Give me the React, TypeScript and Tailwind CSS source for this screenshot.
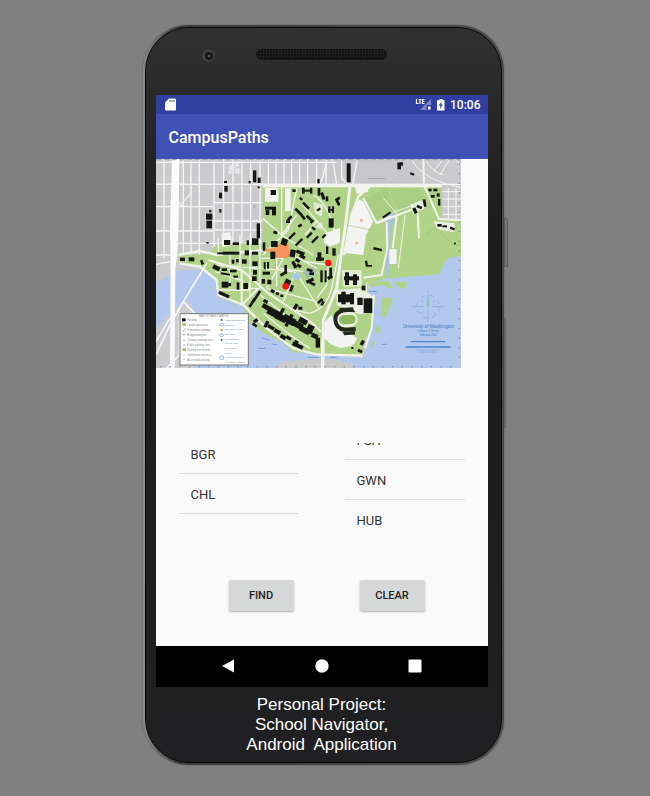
import React from "react";

type Box = [number, number, number, number, number?];

const cityBlocks: Box[] = [
  [309, 46, 10, 36], [296, 78, 6, 7], [323, 68, 9, 16], [222, 78, 9, 6], [223, 93, 10, 17],
  [207, 113, 9, 17], [208, 162, 6, 11], [168, 176, 19, 18], [169, 197, 17, 23], [320, 205, 10, 45],
  [178, 165, 6, 7], [169, 261, 7, 5], [590, 25, 12, 57], [742, 23, 11, 20], [748, 22, 11, 10], [780, 54, 13, 6, 20],
  [502, 72, 7, 13], [323, 94, 6, 6],
];

const campusBuildings: Box[] = [
  [345, 155, 33, 9], [347, 165, 11, 15], [366, 162, 12, 19], [362, 105, 16, 15],
  [427, 103, 10, 8], [456, 98, 8, 18], [462, 104, 20, 6], [480, 98, 7, 18], [410, 186, 18, 8, -50], [408, 196, 12, 8],
  [455, 148, 26, 8, 45], [432, 166, 26, 8, 45], [450, 182, 18, 8, 50], [448, 128, 10, 7, 40],
  [467, 185, 20, 8, 45], [480, 196, 12, 7, -45], [444, 208, 12, 8, -30], [484, 217, 13, 7, 40],
  [503, 99, 8, 23], [514, 112, 9, 22, -20], [527, 124, 8, 15], [555, 128, 16, 8, -30], [560, 134, 8, 18, -25],
  [535, 154, 6, 20], [546, 154, 6, 20], [534, 162, 18, 5], [536, 190, 15, 28], [500, 160, 12, 7, -35],
  [413, 239, 26, 7, -45], [433, 258, 28, 7, -45], [467, 237, 22, 7, -45], [482, 250, 26, 7, -45], [515, 240, 14, 7, -45],
  [370, 228, 12, 9, 20], [363, 258, 20, 18], [394, 251, 18, 20, 20], [338, 262, 8, 25], [361, 290, 15, 22],
  [420, 284, 16, 22, 10], [438, 288, 26, 10, 22], [448, 300, 18, 10, 30], [502, 292, 12, 26], [498, 308, 24, 9],
  [528, 274, 7, 23], [547, 280, 10, 22], [428, 318, 10, 22, -25], [436, 312, 14, 9, 30], [440, 328, 14, 9, 30],
  [222, 255, 19, 15], [248, 262, 19, 8], [290, 256, 7, 14], [306, 250, 19, 20],
  [202, 292, 26, 6], [218, 290, 50, 9], [284, 286, 13, 15], [306, 290, 18, 9], [90, 308, 15, 10],
  [116, 307, 17, 12], [152, 315, 8, 14, -20], [245, 314, 8, 12], [258, 312, 8, 10], [276, 313, 14, 13], [307, 319, 16, 14],
  [188, 332, 22, 13, 25], [215, 340, 16, 8], [240, 344, 20, 8], [212, 354, 28, 6, 10], [250, 362, 14, 6],
  [341, 321, 6, 22], [351, 321, 6, 20], [309, 345, 12, 14], [306, 364, 14, 14], [338, 350, 22, 9], [335, 372, 10, 14], [352, 374, 12, 14],
  [403, 330, 8, 26], [390, 352, 22, 8, -30], [403, 373, 18, 22, 25], [420, 390, 9, 20, 20],
  [215, 380, 20, 18], [235, 384, 8, 10], [260, 382, 8, 22], [280, 384, 14, 18], [205, 414, 34, 10, 25],
  [362, 404, 12, 9, 30], [377, 412, 10, 8, 20], [391, 419, 9, 7], [432, 446, 10, 18, 30], [445, 455, 12, 9],
  [470, 342, 18, 8, 20], [478, 352, 14, 8], [468, 372, 24, 10, -25], [478, 382, 18, 8, 25],
  [511, 346, 7, 36], [524, 346, 6, 36], [538, 338, 8, 24], [532, 362, 16, 10, -30], [502, 434, 18, 8, -40], [514, 438, 8, 14, 30],
  [585, 352, 12, 38], [609, 358, 12, 32], [582, 364, 45, 12], [635, 392, 11, 14],
  [564, 418, 46, 24], [574, 410, 13, 38], [600, 414, 12, 34], [622, 428, 16, 22], [641, 430, 26, 44],
  [632, 556, 10, 15, 30], [623, 584, 14, 8, 25], [604, 576, 6, 6], [646, 317, 7, 18, -10], [652, 330, 14, 5],
  [670, 279, 26, 7, 12], [696, 177, 28, 6, -35], [790, 158, 10, 18, -25], [800, 152, 16, 8, 20], [820, 133, 8, 22, -10],
  [835, 101, 10, 8], [850, 101, 12, 8], [842, 120, 12, 8], [860, 115, 9, 10], [864, 132, 7, 20],
  [862, 207, 13, 8], [877, 211, 14, 6], [900, 217, 14, 7, 20], [912, 263, 6, 5],
  [316, 405, 8, 38, 33], [302, 430, 8, 28, 33], [340, 434, 14, 10, 30],
  [336, 450, 28, 14, 30], [352, 462, 36, 22, 28], [376, 478, 34, 20, 28], [390, 458, 10, 26, 28], [398, 484, 38, 22, 28],
  [412, 476, 10, 40, 28], [424, 500, 36, 18, 28], [446, 490, 26, 16, 28], [448, 518, 32, 16, 28], [470, 510, 20, 26, 25],
  [484, 536, 20, 14, 25], [497, 548, 13, 30], [310, 492, 14, 10, -35], [306, 506, 16, 8, 35],
  [344, 498, 10, 20, 30], [352, 512, 22, 10, 30], [372, 524, 20, 12, 30], [390, 540, 18, 12, 30], [408, 544, 16, 10, 30],
  [426, 566, 34, 12, 25], [432, 556, 12, 14, 25],
];

const streetXs = [42, 100, 123, 148, 192, 221, 249, 276, 302, 330, 355, 378, 402, 425, 449, 473, 500, 528];

const leftLegend = [
  "Building", "Landscaped area", "Pedestrian pathway", "Bridge/overpass", "Campus parking area",
  "Public parking area", "Parking (restricted)", "Gatehouse entrance", "Accessible parking",
];
const rightLegend = [
  "Campus Entrances", "Bus stop", "Emergency Phone", "Bus Route", "Transit Station",
  "Bicycle route", "Public path", "Stairs", "Construction Area", "Accessible entrance",
];

function Shapes({ items }: { items: Box[] }) {
  return (
    <g fill="#151715">
      {items.map(([x, y, w, h, r = 0], i) => (
        <rect key={i} x={x} y={y} width={w} height={h} transform={`rotate(${r} ${x + w / 2} ${y + h / 2})`} />
      ))}
    </g>
  );
}

function CampusMap() {
  return (
    <svg viewBox="18 12 915 627" className="block w-[305px] max-w-full" role="img" aria-label="University of Washington campus map">
      <rect x="18" y="12" width="915" height="627" fill="#cbcacc" />
      {/* city streets */}
      <g stroke="#f5f5f6" strokeWidth="4" fill="none">
        {streetXs.map((x) => (
          <path key={x} d={`M${x} 12V${x > 340 ? 92 : 310}`} />
        ))}
        <path d="M18 22H560M18 88H560M18 155H190M190 143H338M190 198H338M18 228H190M190 225H338M85 265H338M18 300H70M18 328L70 318M100 155L70 130M123 115L95 145" />
        <path d="M532 12L520 60 510 88M548 12L560 88M575 12V70L600 92M622 12L608 88M18 88H932" />
        <path d="M785 12Q815 75 932 97M825 12Q845 50 880 60M880 12L850 50M900 12L870 60M915 12L932 30M878 110H932M878 132H932M878 155H932M878 178H932M895 98V195M918 98V195" strokeWidth="3" />
      </g>
      <path d="M626 12H755L815 84H624Z" fill="#c7c6ca" />
      <path d="M655 71H706" stroke="#9a9aa2" strokeWidth="3" strokeDasharray="6 2" />
      <g fill="#e3e5ef"><circle cx="245" cy="38" r="9" /><circle cx="263" cy="48" r="9" /><circle cx="260" cy="30" r="7" /><circle cx="240" cy="51" r="6" /></g>
      {/* lakes and bays */}
      <path d="M18 382L60 360 90 345 150 345 190 365 280 450 300 500 400 560 480 598 640 610 650 560 660 400 700 350 860 345 885 305 932 300V639H18V520L70 465 110 438 135 475 150 475V639H18Z" fill="#b2c9ed" />
      <path d="M18 520L75 460 112 436 134 470 134 639H18Z" fill="#cccccf" />
      {/* campus grounds */}
      <path d="M338 92H876V190L932 198V303L900 308 884 320 870 358 700 371 652 386 650 412 676 430 664 515 645 555 638 600 600 602 520 596 430 592 395 560 340 535 292 495 280 455 205 425 192 370 150 335 85 325 90 300 170 298 205 265 338 265Z" fill="#b1d388" />
      <path d="M655 385L712 376 730 398 715 400 700 390 660 396ZM728 380L770 380 764 402 745 396ZM696 430L722 428 726 442 706 485 692 482ZM676 517L688 512 692 530 680 535ZM666 560L676 565 660 580Z" fill="#b1d388" />
      <path d="M718 168L704 200 712 240 706 370 716 360 722 230 736 180Z" fill="#a9c4d6" />
      <g fill="#9cc276" opacity=".35">
        <path d="M648 130L710 100 735 165 680 195ZM720 105L810 100 820 135 745 172Z" />
      </g>
      {/* paved areas */}
      <g fill="#f4f3f4">
        <path d="M345 98H385V140H345ZM405 100H422V168H405ZM616 142Q630 128 642 142L670 200 648 240 640 300 584 294 597 205Z" />
        <path d="M718 283H740V327H718ZM525 235L570 218V262L540 275 520 262ZM615 95H650L655 110 620 118ZM215 236L240 230 248 270 216 276Z" />
        <path d="M524 500L545 480 560 520 600 535 620 550Q618 578 570 578 540 572 522 548Z" />
        <path d="M560 405L630 400 672 425 672 470 630 478 560 450ZM850 198L915 205 912 232 862 222Z" opacity=".85" />
        <path d="M490 140L520 150 515 185 495 175ZM495 215L515 200 520 225ZM575 345H635V395H580ZM780 150L815 135 825 160 790 178Z" opacity=".7" />
      </g>
      <g stroke="#f1f3ec" fill="none" strokeLinejoin="round">
        <path d="M338 92H876M600 92L588 200 572 310 560 400 520 495 518 639" strokeWidth="9" />
        <path d="M660 95L625 125 604 180 582 300" strokeWidth="7" />
        <path d="M85 300L150 288 200 300 340 285M88 325L150 335 200 375 205 420 280 450 350 520 430 580 500 598 638 602" strokeWidth="7" />
        <path d="M175 315L275 345 355 415 430 465 488 505 512 530M275 345V450L325 400M640 130L680 205 820 150M820 12L822 90 867 192 932 196M676 205L720 185H740L728 280M710 200L712 280 695 360 640 368M803 173L807 250M672 420L665 520 645 580" strokeWidth="6" />
        <path d="M395 95V240M338 190L395 240 440 180M440 100L415 225 338 300M455 145L545 250M490 120Q545 150 560 270M500 200L465 240M395 240L490 300M205 250V300M240 300V400M270 240V340M300 240V420M330 245V400M195 350L280 378M200 330L330 340M280 400H330M335 310H400L350 400M335 340L430 350M390 340L500 355M380 300V395M436 350L400 440M440 355L510 465M465 320L535 330 530 390 500 430M430 300L500 340M565 300L545 400Q530 460 480 475L430 465M350 400L500 440M330 420L420 490M200 405H300M340 475L420 540 480 580" strokeWidth="4" />
        <path d="M745 340L765 180M700 130L745 180M650 385L648 420M730 172L820 140" strokeWidth="3" />
      </g>
      <path d="M830 240Q850 205 880 240T930 270M590 210L665 225" stroke="#8fb067" strokeWidth="2" fill="none" strokeDasharray="6 3" />
      <g fill="#96b3b9" opacity=".8"><path d="M458 350L490 335 500 360 470 368ZM310 150H316V160H310Z" /></g>
      <ellipse cx="439" cy="364" rx="13" ry="10" fill="#a2c8ea" />
      <path d="M373 280L388 266 415 264 421 302 408 310 378 308 372 292 348 290 348 282Z" fill="#f5955c" />
      <Shapes items={cityBlocks} />
      <Shapes items={campusBuildings} />
      {/* stadium */}
      <g transform="rotate(-4 588 494)">
        <path d="M610 462H575Q550 466 550 494 552 525 580 530H615V518H585Q565 514 564 494 566 476 584 472H618Z" fill="#20281d" />
        <rect x="562" y="472" width="60" height="44" rx="21" fill="#f2f2e9" />
        <rect x="567" y="480" width="50" height="28" rx="14" fill="#8bb95d" />
        <path d="M575 530H612V540H580ZM570 458H612V466H572Z" fill="#20281d" />
      </g>
      <g fill="#f0a57a"><circle cx="634" cy="196" r="4" /><circle cx="620" cy="264" r="4" /><circle cx="374" cy="340" r="3" /></g>
      {/* freeway */}
      <path d="M66 12L88 12 86 200 82 300 76 340 74 639 60 639 62 320 60 220Z" fill="#fbfbfc" />
      <g fill="none" stroke="#f5f6fa">
        <path d="M172 322L100 440 60 510 18 600M100 440L134 475M88 470V600L50 639M18 560L60 490" strokeWidth="5" />
      </g>
      <path d="M370 639L395 621 480 613H560L600 625 618 639Z" fill="#c9c9ca" />
      <path d="M513 560H523V639H513Z" fill="#f3f3f4" />
      <path d="M335 548L360 556M325 580H347M365 567L380 569M655 408L680 410M695 568H712M473 607H505M540 607H560" stroke="#6d9bd2" strokeWidth="3" />
      {/* legend */}
      <rect x="90" y="476" width="205" height="154" fill="#fff" stroke="#777" strokeWidth="3" />
      <g className="font-['Liberation_Sans',Arial,sans-serif]" fill="#888" fontSize="8">
        <text x="191" y="486" textAnchor="middle">MAP OF MAIN CAMPUS</text>
        {leftLegend.map((t, i) => (
          <text key={t} x="112" y={498 + i * 15}>{t}</text>
        ))}
        {rightLegend.map((t, i) => (
          <text key={t} x="225" y={498 + i * 14} fontSize="7" fill="#6485aa">{t}</text>
        ))}
      </g>
      <rect x="96" y="490" width="11" height="9" fill="#111" />
      <path d="M97 505H108V513H97ZM97 580H108V588H97Z" fill="#9ec267" />
      <path d="M98 530L108 520M98 539H106M99 556H105M99 570H105M100 600H104M100 613H104" stroke="#777" strokeWidth="2" />
      <path d="M210 505H220V512H210ZM210 537H220V544H210ZM210 603H220V613H210Z" fill="none" stroke="#6fa2d8" strokeWidth="2" />
      <circle cx="215" cy="525" r="4" fill="#eea24c" /><circle cx="215" cy="555" r="3" fill="#356" /><circle cx="215" cy="495" r="3" fill="#356" />
      {/* compass and map title */}
      <g stroke="#86a9d8" strokeWidth="2" fill="none">
        <path d="M834 405V445M834 465V500M786 455H822M846 455H882M812 433L820 441M856 433L848 441M812 477L820 469M856 477L848 469" />
        <circle cx="834" cy="455" r="34" strokeDasharray="16 11" />
      </g>
      <path d="M834 422L838 448 834 460 830 448Z" fill="#8cc4a7" />
      <g className="font-['Liberation_Sans',Arial,sans-serif]" fill="#3f75c5" textAnchor="middle">
        <text x="835" y="518" fontSize="14">University of Washington</text>
        <text x="835" y="530" fontSize="8">Campus &amp; Vicinity</text>
        <text x="835" y="542" fontSize="8">February 2006</text>
      </g>
      <path d="M782 560H885M767 576H902" stroke="#4f83ca" strokeWidth="4" />
      <path d="M798 585H870M805 591H862" stroke="#7fa4dc" strokeWidth="2" />
      {/* grid ticks round the map */}
      <path d="M30 635H925M928 25V630" stroke="#8492a4" strokeWidth="4" strokeDasharray="4 25" />
      <path d="M20 14H932" stroke="#a9abbb" strokeWidth="4" strokeDasharray="14 9" />
      {/* route ends */}
      <g fill="#ff1010"><circle cx="407" cy="394" r="10" /><circle cx="535" cy="324" r="10" /></g>
    </svg>
  );
}

function StatusIcons() {
  return (
    <svg viewBox="0 0 30 14" className="h-[14px] w-[30px]" aria-hidden="true">
      <path d="M1.500 1V5.500H3.500M3.500 1.500H6.500M5 1.500V6M9.500 1.500H7.500V5.500H9.500M7.500 3.500H9.500" fill="none" stroke="#fff" strokeWidth="1.200" />
      <path d="M16 1V12H5Z" fill="#7d88cf" />
      <path d="M11.500 7H16V12.500H11.500Z" fill="#303f9f" />
      <path d="M13 8.500H15.500V11.500H13Z" fill="#fff" />
      <path d="M24.500 1H27.500V2.200H29.500V12.500H22V2.200H24.500Z" fill="#fff" />
      <path d="M26.500 3.500L23.700 7.500H25.300L25 11 27.800 6.500H26.200Z" fill="#303f9f" />
    </svg>
  );
}

function StopList({ label, stops, className }: { label: string; stops: string[]; className: string }) {
  return (
    <div className="h-[88px] overflow-hidden">
      <ul aria-label={label} className={className}>
        {stops.map((s) => (
          <li key={s} className="flex h-[40px] items-center border-b border-[#dcdcdc] pt-[2px] pl-3 text-[13px] text-[#333]">
            {s}
          </li>
        ))}
      </ul>
    </div>
  );
}

const raised =
  "h-[31px] w-[65px] rounded-[2px] bg-[#d6d7d7] pt-[2px] text-[11px] font-medium text-[#222] shadow-[0_1px_2px_rgba(0,0,0,0.3)]";

export default function App() {
  return (
    <main className="flex min-h-screen items-start justify-center bg-[#808080] pt-[25px] pb-[31px] font-['Roboto',sans-serif]">
      <div className="relative w-full max-w-[365px] pr-[4px]">
        <span className="absolute top-[193px] right-0 h-[49px] w-[4px] rounded-r-[1px] border border-[#5c5a5b] bg-[#777]" />
        <span className="absolute top-[293px] right-[2px] h-[110px] w-[2px] bg-[#6b6566]" />
        <div className="rounded-[46px] bg-linear-to-r from-[#8a8a8a] via-[#3a3a3a] via-10% to-[#4a4a4a] p-[2px] shadow-[0_0_2px_#555]">
          <div className="rounded-[44px] border border-[#080808] bg-linear-to-b from-[#303031] via-[#1b1b1c] via-30% to-[#202022] pr-[13px] pl-[10px]">
            <div className="grid h-[67px] grid-cols-[1fr_131px_1fr] items-start pt-[21px]">
              <div className="flex justify-center pl-[6px]">
                <span className="flex size-[13px] items-center justify-center rounded-full bg-[#404044]">
                  <span className="flex size-[8px] items-center justify-center rounded-full bg-[#18181d]">
                    <span className="size-[2px] rounded-full bg-[#687184]" />
                  </span>
                </span>
              </div>
              <svg viewBox="0 0 131 11" className="h-[11px] w-full" aria-hidden="true">
                <defs>
                  <pattern id="mesh" width="3" height="3" patternUnits="userSpaceOnUse">
                    <rect width="3" height="3" fill="#111" />
                    <circle cx="1.500" cy="1.500" r="0.900" fill="#282828" />
                  </pattern>
                </defs>
                <rect x="0.500" y="0.500" width="130" height="10" rx="5" fill="url(#mesh)" stroke="#151515" />
              </svg>
            </div>

            <div className="bg-[#fafafa]">
              <div className="flex h-[19px] items-center justify-between bg-[#303f9f] pr-[7px] pl-[9px]">
                <svg viewBox="0 0 11 13" className="h-[13px] w-[11px]" aria-hidden="true">
                  <path d="M4 .500H10Q11 .500 11 1.500V11.500Q11 12.500 10 12.500H1Q0 12.500 0 11.500V4.500Z" fill="#fff" />
                  <path d="M5 2V4M7 2V4M9 2V4" stroke="#303f9f" strokeWidth=".8" />
                </svg>
                <div className="flex items-center gap-[5px]">
                  <StatusIcons />
                  <time className="text-[12px] font-medium text-white">10:06</time>
                </div>
              </div>
              <header className="flex h-[45px] items-center bg-[#3f51b5] pt-[2px] pl-[13px]">
                <h1 className="text-[16px] font-medium text-white">CampusPaths</h1>
              </header>

              <CampusMap />

              <div className="grid grid-cols-2 gap-x-[46px] px-[23px] pt-[75px]">
                <StopList label="Start building" stops={["BGR", "CHL"]} className="-mt-[9px]" />
                <StopList label="End building" stops={["FSH", "GWN", "HUB"]} className="-mt-[23px]" />
              </div>
              <div className="flex justify-center gap-[66px] pt-[49px] pb-[35px] pl-[10px]">
                <button type="button" className={raised}>FIND</button>
                <button type="button" className={raised}>CLEAR</button>
              </div>

              <nav className="flex h-[41px] items-center justify-center gap-[79px] bg-black pb-[2px]">
                <button type="button" aria-label="Back">
                  <svg viewBox="0 0 14 14" className="size-[14px]"><path d="M0 7L12 .500V13.500Z" fill="#fff" /></svg>
                </button>
                <button type="button" aria-label="Home">
                  <svg viewBox="0 0 14 14" className="size-[14px]"><circle cx="7" cy="7" r="6.700" fill="#fff" /></svg>
                </button>
                <button type="button" aria-label="Recent apps">
                  <svg viewBox="0 0 14 14" className="size-[14px]"><rect x=".5" y=".5" width="13" height="13" rx="1" fill="#fff" /></svg>
                </button>
              </nav>
            </div>

            <p className="h-[75px] pt-[8px] text-center font-['Liberation_Sans',Arial,sans-serif] text-[17px] leading-[20px] whitespace-pre text-white">
              {"Personal Project:\nSchool Navigator,\nAndroid  Application"}
            </p>
          </div>
        </div>
      </div>
    </main>
  );
}
